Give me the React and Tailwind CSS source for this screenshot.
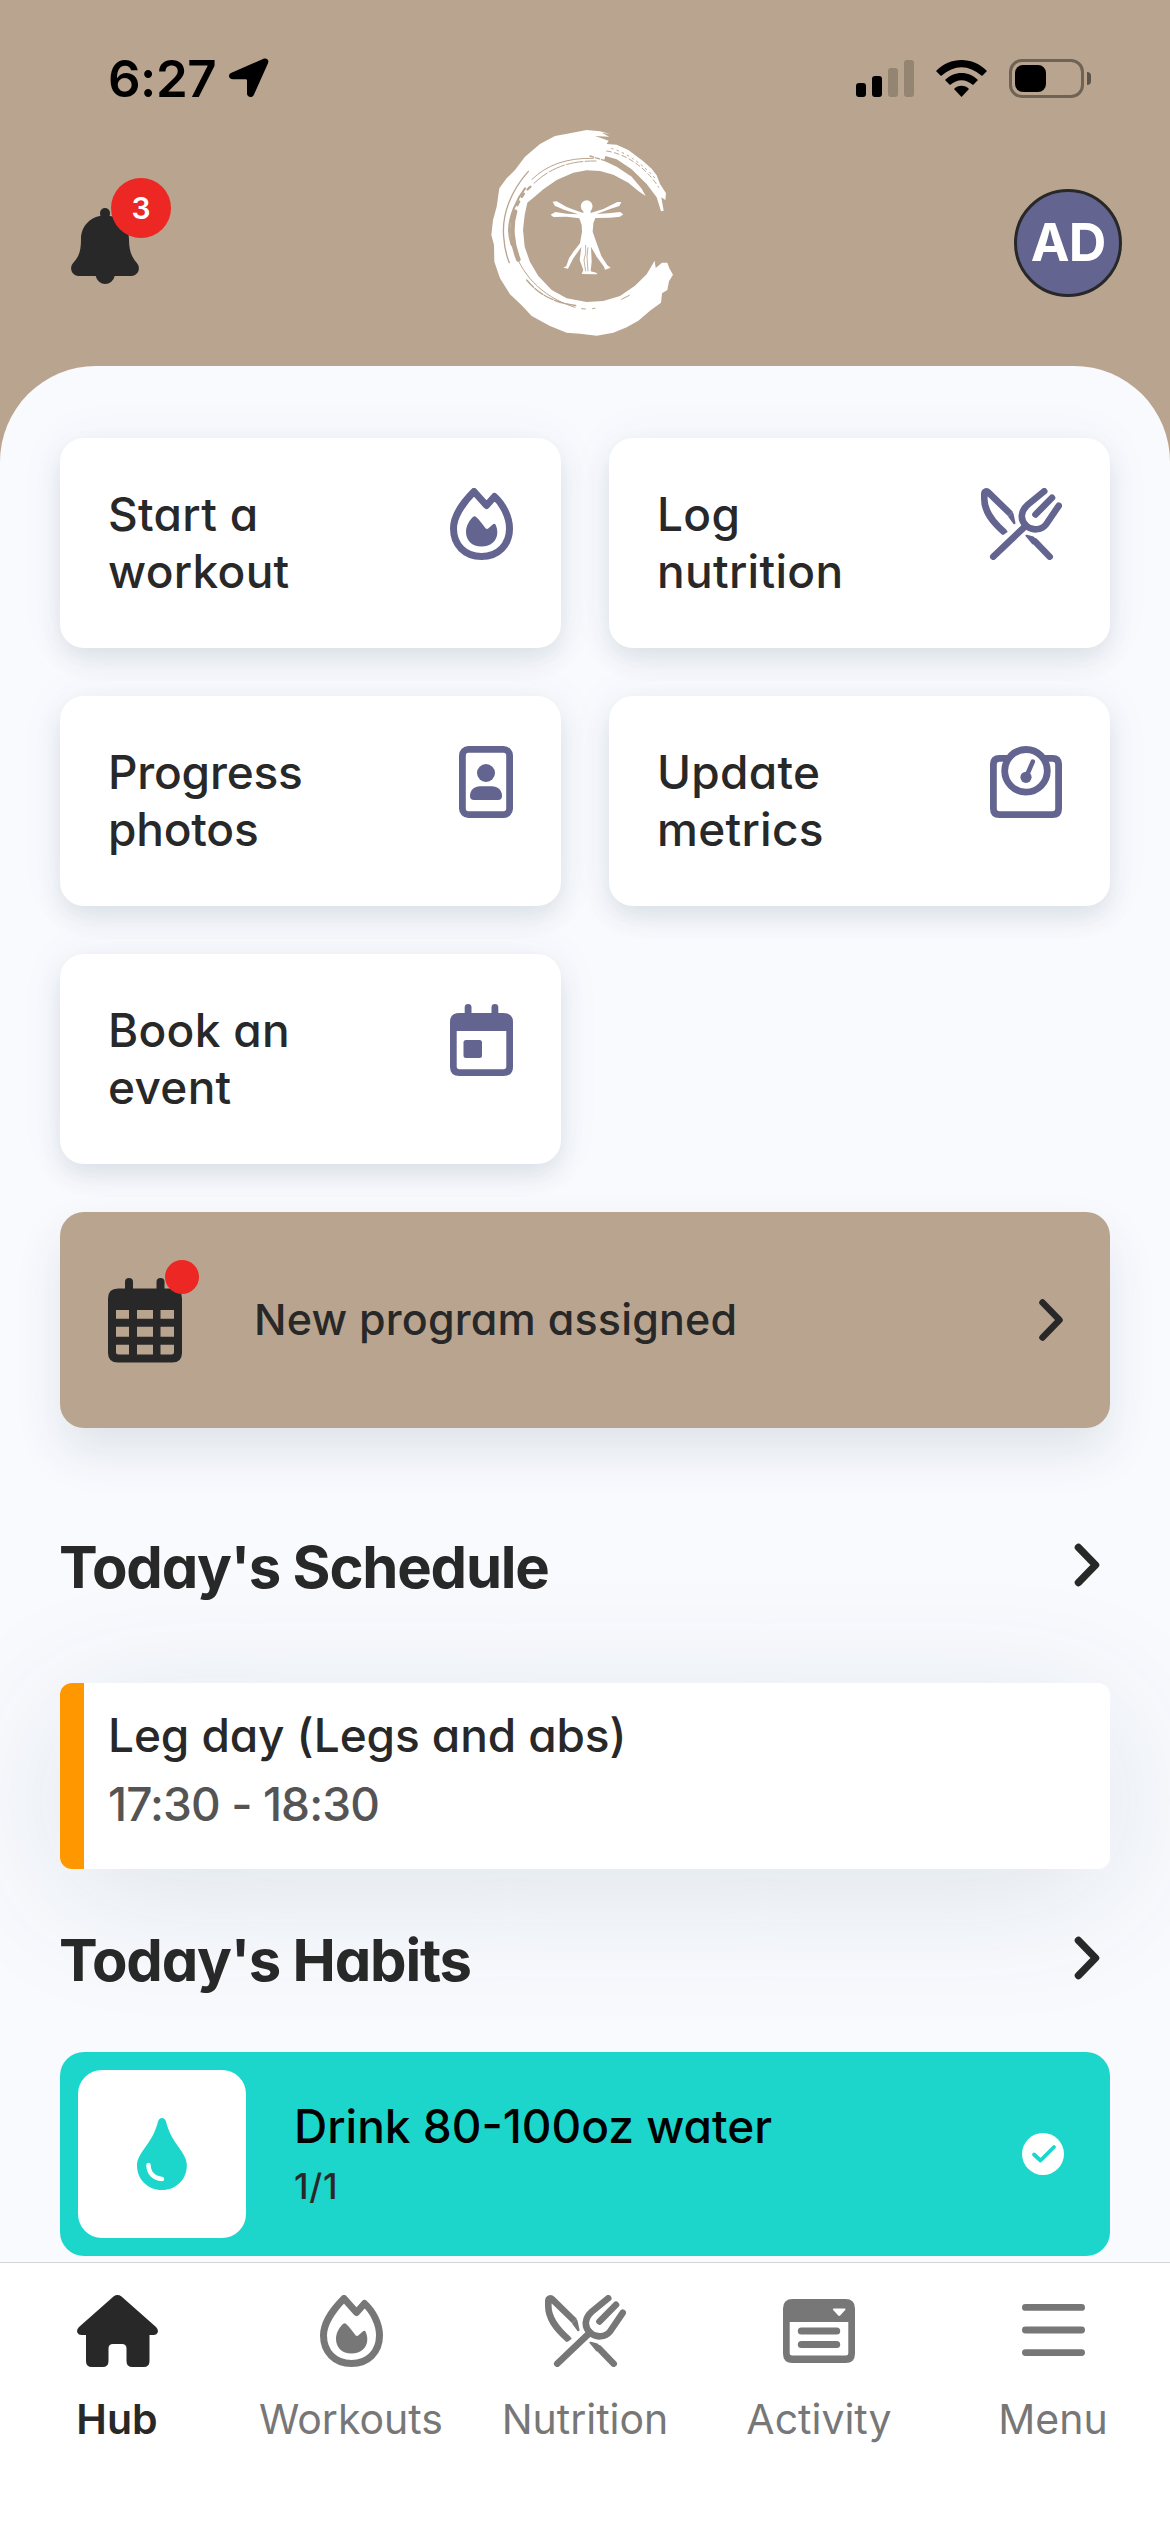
const FlameIcon = () => (
  <svg width="63" height="72" viewBox="0 0 63 72" fill="none">
    <path
      d="M24 3.5C12 15.5 3.5 29.5 3.5 40.500C3.500 57 15 68.500 31.500 68.500S59.500 57 59.500 40.500C59.500 29 53 16 44.500 8.500L36.500 17.500Z"
      stroke="currentColor"
      strokeWidth="7"
      strokeLinejoin="round"
    />
    <path
      d="M23.200 28.800Q24.500 27.500 25.900 28.800C30 32.500 32.500 36.500 35.500 40.300Q37 41.800 38.500 40.300L43 36.200Q44.600 35 45.500 36.500C46.700 39 47.300 41.500 47.300 44.500C47.300 52.500 41 58.500 31.500 58.500S16 52.500 16 44C16 38 19 33 23.200 28.800Z"
      fill="currentColor"
    />
  </svg>
);

const ForkKnifeIcon = () => (
  <svg
    width="81"
    height="72"
    viewBox="0 0 81 72"
    fill="none"
    stroke="currentColor"
    strokeWidth="6.600"
    strokeLinecap="round"
    strokeLinejoin="round"
  >
    <path d="M12.300 68.700L45 37.500" />
    <path d="M63.200 3.300L47 16.500C39.500 23 38.800 31.500 45 37.500C51 43.500 60.500 42 65 36.500L77.700 17.800" />
    <path d="M71 9.800L54.500 26.500" />
    <path d="M54 53.500L68.700 68.700" />
    <path d="M44.500 48Q44 46.500 46 46.800L52.500 48.500L57 53L51.500 56.500Z" fill="currentColor" stroke="none" />
    <path d="M23.500 44.500C10.500 33 3.300 23 3.300 11V6C3.300 3.500 5.500 2.500 7.300 4.300L29.500 26" strokeLinecap="butt" />
    <path d="M27 28.500L31.500 24Q32.600 25 32.800 27L34.500 35Q34.300 37 32.500 36Z" fill="currentColor" stroke="none" />
    <path d="M21 41.500L25.500 43.500L22.500 45.800Z" strokeWidth="2" fill="currentColor" />
  </svg>
);

const PhotoIcon = () => (
  <svg width="54" height="72" viewBox="0 0 54 72" fill="none">
    <rect x="3.400" y="3.400" width="47.200" height="65.200" rx="6" stroke="currentColor" strokeWidth="6.800" />
    <circle cx="27" cy="27" r="9" fill="currentColor" />
    <path d="M11 50C11 44 15.500 40.300 21 40.300H33C38.500 40.300 43 44 43 50Q43 54 39 54H15Q11 54 11 50Z" fill="currentColor" />
  </svg>
);

const ScaleIcon = () => (
  <svg width="72" height="72" viewBox="0 0 72 72" fill="none" stroke="currentColor" strokeWidth="6.800">
    <path d="M17 12.400H9.500Q3.400 12.400 3.400 18.500V62.500Q3.400 68.600 9.500 68.600H62.500Q68.600 68.600 68.600 62.500V18.500Q68.600 12.400 62.500 12.400H55" />
    <circle cx="36" cy="24.800" r="21.300" />
    <circle cx="36" cy="31.300" r="5.600" fill="currentColor" stroke="none" />
    <path d="M37 29L42.800 15.700" strokeWidth="4.600" strokeLinecap="round" />
  </svg>
);

const EventIcon = () => (
  <svg width="63" height="72" viewBox="0 0 63 72" fill="currentColor">
    <rect x="14.700" y="0" width="6.800" height="16" rx="3.400" />
    <rect x="41.500" y="0" width="6.800" height="16" rx="3.400" />
    <path
      fillRule="evenodd"
      d="M9.500 9H53.500Q63 9 63 18V63Q63 72 53.500 72H9.500Q0 72 0 63V18Q0 9 9.500 9ZM6.700 27V62.500Q6.700 65.300 9.500 65.300H53.500Q56.300 65.300 56.300 62.500V27Z"
    />
    <rect x="13.500" y="36" width="18.500" height="18" rx="2.500" />
  </svg>
);

const CalendarIcon = () => (
  <svg width="74" height="85" viewBox="0 0 74 85" fill="currentColor">
    <rect x="17" y="0" width="8" height="18" rx="4" />
    <rect x="48.500" y="0" width="8" height="18" rx="4" />
    <path
      fillRule="evenodd"
      d="M10 10.500H64Q74 10.500 74 20.500V75Q74 84.500 64 84.500H10Q0 84.500 0 75V20.500Q0 10.500 10 10.500ZM8 32V40.800H21V32ZM29 32V40.800H45V32ZM52.500 32V40.800H66V32ZM8 48.800V58.800H21V48.800ZM29 48.800V58.800H45V48.800ZM52.500 48.800V58.800H66V48.800ZM8 66.800V74Q8 76.500 10.500 76.500H21V66.800ZM29 66.800V76.500H45V66.800ZM52.500 66.800V76.500H63.500Q66 76.500 66 74V66.800Z"
    />
  </svg>
);

const BellIcon = () => (
  <svg width="68" height="78" viewBox="0 0 68 78" fill="currentColor">
    <circle cx="34" cy="5" r="5" />
    <rect x="29.500" y="5" width="9" height="6" />
    <path d="M34 7.500C20 7.500 10 18 10 31C10 42 8.500 48 2.500 54.500C-2.500 60 1 68 7.500 68H24.700A9.700 10 0 0 0 43.700 68H60.500C67 68 70.500 60 65.500 54.500C60 48 58 42 58 31C58 18 48 7.500 34 7.500Z" />
  </svg>
);

const DropIcon = () => (
  <svg width="50" height="72" viewBox="0 0 50 72" fill="none">
    <path
      d="M25 0C27 0 28.300 1.200 29 3.500C31.500 13 34.500 19 40.500 27.500C46.500 36 49.800 41 49.800 47.500C49.800 61.500 39 72 25 72S0 61.500 0 47.500C0 41 3.500 36 9.500 27.500C15.500 19 18.500 13 21 3.500C21.700 1.200 23 0 25 0Z"
      fill="#1cd6cb"
    />
    <path d="M11.500 47C11.500 54.500 16.500 60.500 25 61" stroke="white" strokeWidth="4.500" strokeLinecap="round" />
  </svg>
);

const HomeIcon = () => (
  <svg width="81" height="72" viewBox="0 0 81 72" fill="currentColor">
    <path d="M36.500 1.500Q40.500 -1.300 44.500 1.500L79 32Q81.600 34.500 80.700 37.500Q79.500 40 76.500 40H72.500V66Q72.500 72 66.500 72H55.500Q49.500 72 49.500 66V53.500Q49.500 49 45 49H36Q31.500 49 31.500 53.500V66Q31.500 72 25.500 72H15Q9 72 9 66V40H4.500Q1.500 40 .3 37.500Q-.6 34.500 2 32Z" />
  </svg>
);

const ActivityIcon = () => (
  <svg width="72" height="72" viewBox="0 -4 72 72" fill="currentColor">
    <path
      fillRule="evenodd"
      d="M9.500 0H62.500Q72 0 72 9.500V54.500Q72 64 62.500 64H9.500Q0 64 0 54.500V9.500Q0 0 9.500 0ZM6.700 23V54Q6.700 56.500 9.200 56.500H62.800Q65.300 56.500 65.300 54V23ZM50.500 9.500Q49.300 9.500 50.200 11L55 16.300Q56.200 17.500 57.400 16.300L62.200 11Q63 9.500 62 9.500Z"
    />
    <path d="M18.300 32H53.700M18.300 45.500H53.700" stroke="currentColor" strokeWidth="7" strokeLinecap="round" />
  </svg>
);

const MenuIcon = () => (
  <svg width="63" height="72" viewBox="0 -9 63 72" stroke="currentColor" strokeWidth="6.800" strokeLinecap="round">
    <path d="M3.400 3.400H59.600M3.400 26H59.600M3.400 48.600H59.600" />
  </svg>
);

const Chevron = ({ strokeWidth = 6.5 }) => (
  <svg width="27" height="44" viewBox="0 0 27 44" fill="none">
    <path
      d="M4.500 4.500L21.500 22L4.500 39.500"
      stroke="#282828"
      strokeWidth={strokeWidth}
      strokeLinecap="round"
      strokeLinejoin="round"
    />
  </svg>
);

const Logo = () => (
  <svg width="188" height="210" viewBox="93 54 564 630" fill="white">
    <path d="M450 72L425 68L448 80L405 78L446 92L440 102L470 104L505 120L548 152L575 176L590 196L600 222L618 250L616 270L604 262L611 302L603 304L590 262L560 222L515 178L470 148L436 138L432 152L470 170L515 200L545 236L557 258L535 243L505 218L460 194L420 183L380 181L340 188L290 210L250 238L222 262L202 278L194 315L189 360L194 410L210 456L235 498L275 540L320 565L380 576L430 573L480 558L525 527L560 493L584 452L587 474L606 458L622 458L628 475L639 494L627 514L622 540L606 550L603 578L570 602L535 632L500 652L460 668L410 677L360 671L320 668L270 648L215 618L185 586L150 553L120 505L103 455L102 405L94 375L99 330L110 290L118 235L140 205L165 180L195 140L240 102L285 78L330 70L380 60L420 64Z" />
    <g fill="none" stroke="#b9a58f" strokeLinecap="round">
      <path d="M205 184C155 240 125 310 131 380Q134 425 148 458" strokeWidth="4" />
      <path d="M195 235C168 270 148 320 147 360Q148 385 155 405" strokeWidth="6" />
      <path d="M165 305C152 345 155 400 175 448" strokeWidth="14" />
      <path d="M172 286Q190 246 214 228" strokeWidth="7" strokeDasharray="12 16" />
      <path d="M216 208C260 165 320 143 400 145" strokeWidth="3" />
      <path d="M222 220C275 170 335 152 408 153" strokeWidth="3" strokeDasharray="50 7" />
      <path d="M160 412C180 485 240 560 345 592" strokeWidth="3" />
      <path d="M200 510C235 552 280 578 350 587" strokeWidth="4" strokeDasharray="30 5" />
      <path d="M365 596L376 597M398 596L405 595M485 568L508 556" strokeWidth="3" />
      <path d="M440 123C500 132 560 175 596 232" strokeWidth="3" strokeDasharray="14 10" />
      <path d="M455 115Q530 140 590 210" strokeWidth="3" strokeDasharray="5 12" />
      <path d="M390 138L442 154" strokeWidth="4" strokeDasharray="12 6" />
    </g>
    <ellipse cx="380" cy="289" rx="17.500" ry="18" />
    <path d="M370 300V309L350 302L320 291L290 274L278 275L284 287L312 299L355 313L320 311L286 306L272 314L280 321L320 320L358 325L365 345L366 365L360 400L340 425L327 445L319 468L310 473L324 476L340 445L364 411L359 450L370 480L365 492L410 493L411 489L392 484L395 455L393 410L410 440L432 470L435 479L452 473L442 466L424 438L410 400L398 365L400 340L406 324L450 323L480 320L490 313L480 306L445 310L410 312L450 297L478 288L484 276L472 276L430 297L392 309V300Z" />
    <path d="M377 405V430L372 450L377 484M384 412L381 440L384 484" stroke="#b9a58f" strokeWidth="2.500" fill="none" />
  </svg>
);

const actions = [
  { lines: ["Start a", "workout"], icon: FlameIcon, tracking: "tracking-[0.3px]" },
  { lines: ["Log", "nutrition"], icon: ForkKnifeIcon, tracking: "tracking-[0.3px]" },
  { lines: ["Progress", "photos"], icon: PhotoIcon, tracking: "tracking-[-0.2px]" },
  { lines: ["Update", "metrics"], icon: ScaleIcon, tracking: "tracking-[0.3px]" },
  { lines: ["Book an", "event"], icon: EventIcon, tracking: "tracking-[0.3px]" },
];

const tabs = [
  { label: "Hub", icon: HomeIcon, active: true },
  { label: "Workouts", icon: FlameIcon },
  { label: "Nutrition", icon: ForkKnifeIcon },
  { label: "Activity", icon: ActivityIcon },
  { label: "Menu", icon: MenuIcon },
];

function StatusBar() {
  return (
    <div className="flex h-[156px] items-center justify-between pl-[108px] pr-[79px] text-black">
      <div className="flex items-center gap-[13px]">
        <span className="text-[51px] leading-none font-semibold tracking-[-0.5px]">6:27</span>
        <svg width="40" height="40" viewBox="0 0 40 40">
          <path d="M34.500 .8C37.500 -.5 40.500 2 39 5.300L25 36.500C23.300 40.500 18 39.500 18 35.500V22.500Q18 21.300 16.800 21.300H4C-.5 21.300 -1.500 16.500 2.500 14.800Z" />
        </svg>
      </div>
      <div className="flex items-center">
        <div className="flex h-[37px] items-end gap-[6px]">
          <div className="h-[14px] w-[10px] rounded-[3px] bg-black" />
          <div className="h-[21px] w-[10px] rounded-[3px] bg-black" />
          <div className="h-[29px] w-[10px] rounded-[3px] bg-black/20" />
          <div className="h-[37px] w-[10px] rounded-[3px] bg-black/20" />
        </div>
        <svg className="ml-[22px]" width="51" height="37" viewBox="0 0 51 37">
          <path d="M0 11C14 -3.600 37 -3.600 51 11L46 16Q25.500 -1.500 5 16Z" />
          <path d="M9 20C18 10.500 33 10.500 42 20L37 25Q25.500 15.500 14 25Z" />
          <path d="M18 29C22 24.800 29 24.800 33 29L25.500 37Z" />
        </svg>
        <div className="ml-[22px] h-[39px] w-[75px] rounded-[13px] border-[3px] border-black/40 p-[3px]">
          <div className="h-[27px] w-[31px] rounded-[8px] bg-black" />
        </div>
        <div className="ml-[3px] h-[13px] w-[4px] rounded-r-full bg-black/50" />
      </div>
    </div>
  );
}

function SectionTitle({ children }) {
  return (
    <div className="flex items-start justify-between pr-[9px]">
      <h2 className="-ml-px text-[58px] leading-[72px] font-bold tracking-[-1.2px]">{children}</h2>
      <span className="pt-[12px]">
        <Chevron strokeWidth={7.5} />
      </span>
    </div>
  );
}

export default function App() {
  return (
    <div className="flex h-[2532px] w-[1170px] flex-col overflow-hidden bg-[#b9a58f] font-['Inter',sans-serif] text-[#282828] [font-feature-settings:'cv11']">
      <header className="h-[366px] shrink-0">
        <StatusBar />
        <div className="-mt-[28px] flex items-start pr-[48px] pl-[71px]">
          <div className="flex-1 pt-[80px]">
            <div className="relative w-[68px]">
              <BellIcon />
              <span className="absolute -top-[30px] left-[40px] flex size-[60px] items-center justify-center rounded-full bg-[#ec2724] text-[30px] font-semibold text-white">
                3
              </span>
            </div>
          </div>
          <div className="-ml-[23px]">
            <Logo />
          </div>
          <div className="flex flex-1 justify-end pt-[61px]">
            <div className="flex size-[108px] items-center justify-center rounded-full border-[3px] border-[#282828] bg-[#63648f] text-[52px] font-bold tracking-[-1px] text-white">
              AD
            </div>
          </div>
        </div>
      </header>

      <main className="h-[1896px] shrink-0 overflow-hidden rounded-t-[96px] bg-[#f9fafe] px-[60px] pt-[72px]">
        <div className="grid grid-cols-2 gap-[48px]">
          {actions.map(({ lines, icon: Icon, tracking }) => (
            <button
              key={lines[0]}
              className="flex h-[210px] items-start justify-between rounded-[24px] bg-white px-[48px] pt-[50px] text-left shadow-[0_12px_24px_rgba(22,59,72,0.10),0_0_48px_rgba(22,80,110,0.05)]"
            >
              <span className={`-mt-[2px] text-[46px] leading-[57px] font-medium ${tracking}`}>
                {lines[0]}
                <br />
                {lines[1]}
              </span>
              <span className="text-[#63648f]">
                <Icon />
              </span>
            </button>
          ))}
        </div>

        <button className="relative mt-[48px] flex h-[216px] w-full items-center rounded-[24px] bg-[#b9a58f] pr-[45px] pl-[48px] text-left shadow-[0_24px_48px_rgba(22,59,72,0.11)]">
          <span className="relative">
            <CalendarIcon />
            <span className="absolute -top-[18px] left-[57px] size-[34px] rounded-full bg-[#ec2724]" />
          </span>
          <span className="-mt-[2px] ml-[72px] flex-1 text-[43px] font-medium tracking-[0.2px]">
            New program assigned
          </span>
          <Chevron />
        </button>

        <div className="mt-[103px]">
          <SectionTitle>Today's Schedule</SectionTitle>
        </div>
        <div className="mt-[80px] flex h-[186px] rounded-[12px] bg-white shadow-[0_24px_140px_rgba(22,70,85,0.12)]">
          <div className="w-[24px] rounded-l-[12px] bg-[#ff9800]" />
          <div className="pt-[18px] pl-[24px] text-[46px] leading-[69px] font-medium">
            <p className="tracking-[-0.1px]">Leg day (Legs and abs)</p>
            <p className="tracking-[-0.9px] text-[#545454]">17:30 - 18:30</p>
          </div>
        </div>

        <div className="mt-[55px]">
          <SectionTitle>Today's Habits</SectionTitle>
        </div>
        <div className="mt-[56px] flex h-[204px] items-center rounded-[24px] bg-[#1cd6cb] pr-[46px] pl-[18px]">
          <div className="flex size-[168px] items-center justify-center rounded-[24px] bg-white">
            <DropIcon />
          </div>
          <div className="mt-[3px] ml-[48px] flex-1 font-medium">
            <p className="text-[46px] leading-[60px] text-black">Drink 80-100oz water</p>
            <p className="text-[35px] leading-[60px] tracking-[0.8px]">1/1</p>
          </div>
          <svg width="42" height="42" viewBox="0 0 42 42" fill="none">
            <circle cx="21" cy="21" r="21" fill="white" />
            <path
              d="M12 21.500L18.500 27.500L32 14"
              stroke="#1cd6cb"
              strokeWidth="3.800"
              strokeLinecap="round"
              strokeLinejoin="round"
            />
          </svg>
        </div>
      </main>

      <nav className="grid flex-1 grid-cols-5 border-t border-[#d3d4d7] bg-white pt-[32px]">
        {tabs.map(({ label, icon: Icon, active }) => (
          <button
            key={label}
            className={`flex flex-col items-center ${
              active ? "font-semibold text-[#282828]" : "text-[#777777]"
            }`}
          >
            <Icon />
            <span className="mt-[27px] text-[41px] leading-[50px]">{label}</span>
          </button>
        ))}
      </nav>
    </div>
  );
}
